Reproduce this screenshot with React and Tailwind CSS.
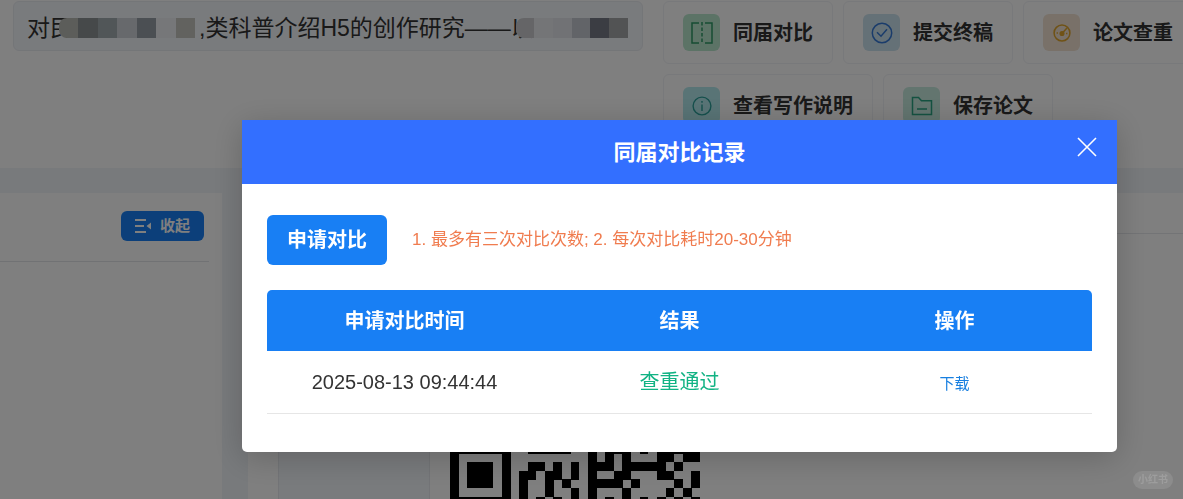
import { useState } from "react";

const records = [
  { time: "2025-08-13 09:44:44", result: "查重通过", href: "#download" },
];

const qrRows = [
  "11111110011111001011101011111",
  "10000010000000001010100011011",
  "10111010011010101110111110100",
  "10111010110110101001100011001",
  "10111010100101001111010000101",
  "10000010100100101000100001010",
  "11111110101010101010101010101",
];

function CompareIcon() {
  return (
    <svg width="22" height="22" viewBox="0 0 22 22" fill="none" stroke="#2c9a66" strokeWidth="1.5">
      <path d="M8 1H1v20h7M14 1h7v20h-7" />
      <path d="M11 0v22" strokeDasharray="3.5 2" />
    </svg>
  );
}

function CheckIcon() {
  return (
    <svg width="22" height="22" viewBox="0 0 22 22" fill="none" stroke="#3579d6" strokeWidth="1.5">
      <circle cx="11" cy="11" r="9.7" />
      <path d="M6 10.2l4 4 6-7" />
    </svg>
  );
}

function GaugeIcon() {
  return (
    <svg width="18" height="18" viewBox="0 0 20 20" fill="none" stroke="#e0a52c" strokeWidth="1.7">
      <circle cx="10" cy="10" r="8.8" />
      <circle cx="10" cy="10.5" r="2" fill="#e0a52c" />
      <path d="M11 9.5l4.5-5M4 10h1.5M14.5 10.5H16" />
    </svg>
  );
}

function InfoIcon() {
  return (
    <svg width="20" height="20" viewBox="0 0 20 20" fill="none" stroke="#2ba09a" strokeWidth="1.4">
      <circle cx="10" cy="10" r="8.9" />
      <path d="M10 8.5V15M10 5v1.8" />
    </svg>
  );
}

function FolderIcon() {
  return (
    <svg width="22" height="20" viewBox="0 0 22 20" fill="none" stroke="#2aa583" strokeWidth="1.5">
      <path d="M1.5 1.5h6l3 3.2h10v13.8h-19zM6 13h10" />
    </svg>
  );
}

function ActionCard({ icon, tint, label }) {
  return (
    <button className="flex shrink-0 items-center gap-[13px] rounded-md border border-[#f0f2f6] bg-white px-[19px] py-3">
      <span className={`flex size-[37px] items-center justify-center rounded-md ${tint}`}>{icon}</span>
      <span className="whitespace-nowrap text-[20px] leading-6 font-bold text-[#333]">{label}</span>
    </button>
  );
}

function QrCode() {
  return (
    <svg width="250" height="250" viewBox="0 0 29 29" shapeRendering="crispEdges">
      {qrRows.map((row, y) =>
        row.split("").map((cell, x) =>
          cell === "1" ? <rect key={`${x}-${y}`} x={x} y={y} width="1.02" height="1.02" fill="#000" /> : null
        )
      )}
    </svg>
  );
}

function Paper() {
  return (
    <div className="flex h-full flex-col overflow-hidden bg-[#f1f5f9]">
      <header className="flex h-[168px] shrink-0 items-start bg-white pt-px pl-[13px]">
        <h1 className="flex min-w-0 flex-1 items-center overflow-hidden rounded-md border border-[#e9ecf1] bg-[#f3f6fa] pt-2 pb-1 pl-[13px] text-[23px] leading-9 font-normal whitespace-nowrap text-[#333]">
          <span>对民</span>
          <span className="-ml-[14px] flex h-5 w-[136px] shrink-0 overflow-hidden rounded-l-lg">
            <i className="flex-1 bg-[#b9bab4]" />
            <i className="flex-1 bg-[#8c9394]" />
            <i className="flex-1 bg-[#a3acb0]" />
            <i className="flex-1 bg-[#cfd3d8]" />
            <i className="flex-1 bg-[#969fa6]" />
            <i className="flex-1 bg-[#eceff3]" />
            <i className="flex-1 bg-[#c5c4bf]" />
          </span>
          <span className="ml-1">,</span>
          <span>类科普介绍H5的创作研究——以</span>
          <span className="-ml-[18px] flex h-5 w-[112px] shrink-0 overflow-hidden rounded-l-lg">
            <i className="flex-1 bg-[#cacbce]" />
            <i className="flex-1 bg-[#e9ebef]" />
            <i className="flex-1 bg-[#e2e5ea]" />
            <i className="flex-1 bg-[#c5c9d0]" />
            <i className="flex-1 bg-[#767b86]" />
            <i className="flex-1 bg-[#a5a6a8]" />
          </span>
        </h1>
        <nav className="ml-5 flex w-[520px] shrink-0 flex-col gap-[10px]">
          <div className="flex gap-[10px]">
            <ActionCard icon={<CompareIcon />} tint="bg-[#b8e6cc]" label="同届对比" />
            <ActionCard icon={<CheckIcon />} tint="bg-[#cbe2ee]" label="提交终稿" />
            <ActionCard icon={<GaugeIcon />} tint="bg-[#f2e3d3]" label="论文查重" />
          </div>
          <div className="flex gap-[10px]">
            <ActionCard icon={<InfoIcon />} tint="bg-[#b2e8ec]" label="查看写作说明" />
            <ActionCard icon={<FolderIcon />} tint="bg-[#c6eadf]" label="保存论文" />
          </div>
        </nav>
      </header>

      <div className="flex flex-1 gap-[26px] pt-[25px]">
        <aside className="w-[222px] shrink-0 bg-white pr-[13px]">
          <div className="flex justify-end border-b border-[#e2e4e8] pt-[18px] pr-[5px] pb-5">
            <button className="flex h-[30px] items-center gap-2 rounded-md bg-[#187ff4] px-[14px] text-[15px] font-bold text-white">
              <svg width="17" height="14" viewBox="0 0 17 14" fill="#fff">
                <path d="M0 0h11v2H0zM0 6h9v2H0zM0 12h11v2H0zM16 3.5v7L11.5 7z" />
              </svg>
              收起
            </button>
          </div>
        </aside>
        <main className="flex min-w-0 flex-1 flex-col bg-white">
          <div className="h-[41px] shrink-0 border-b border-[#e6e8ec]" />
          <div className="flex flex-1 pl-[30px]">
            <div className="w-[152px] shrink-0 border-x border-[#e6e9ee] bg-[#f3f6fa]" />
            <div className="pt-[211px] pl-5">
              <QrCode />
            </div>
          </div>
        </main>
      </div>
    </div>
  );
}

function RecordDialog({ onClose }) {
  return (
    <section
      role="dialog"
      aria-labelledby="dialog-title"
      className="w-full overflow-hidden rounded-b-[5px] bg-white shadow-[0_6px_32px_rgba(0,0,0,0.2)]"
    >
      <div className="relative flex h-16 items-center justify-center bg-[#336fff] text-white">
        <h2 id="dialog-title" className="text-[22px] font-bold">同届对比记录</h2>
        <button aria-label="关闭" onClick={onClose} className="absolute top-[17px] right-5">
          <svg width="20" height="20" viewBox="0 0 20 20" stroke="#fff" strokeWidth="1.6">
            <path d="M1 1l18 18M19 1L1 19" />
          </svg>
        </button>
      </div>
      <div className="px-[25px] pt-[31px] pb-[38px]">
        <div className="flex items-center gap-[25px]">
          <button className="h-[50px] rounded-md bg-[#187ff4] px-5 text-[20px] font-bold text-white">申请对比</button>
          <p className="text-[17px] text-[#f07c4f]">1. 最多有三次对比次数; 2. 每次对比耗时20-30分钟</p>
        </div>
        <table className="mt-[25px] w-full table-fixed text-center text-[20px]">
          <thead>
            <tr className="h-[61px] text-white">
              <th className="rounded-tl-[5px] bg-[#187ff4]">申请对比时间</th>
              <th className="bg-[#187ff4]">结果</th>
              <th className="rounded-tr-[5px] bg-[#187ff4]">操作</th>
            </tr>
          </thead>
          <tbody>
            {records.map((r) => (
              <tr key={r.time} className="h-[62px] border-b border-[#e6e6e6]">
                <td className="text-[#333]">{r.time}</td>
                <td className="text-[#12b384]">{r.result}</td>
                <td>
                  <a href={r.href} className="text-[15px] text-[#187fe0]">下载</a>
                </td>
              </tr>
            ))}
          </tbody>
        </table>
      </div>
    </section>
  );
}

export default function App() {
  const [open, setOpen] = useState(true);

  return (
    <div className="relative h-screen overflow-hidden font-['Liberation_Sans','Noto_Sans_CJK_SC',sans-serif]">
      <Paper />
      {open && (
        <div className="fixed inset-0 flex items-start bg-black/50 pt-[120px] pr-[66px] pl-[242px]">
          <RecordDialog onClose={() => setOpen(false)} />
        </div>
      )}
      <span className="absolute right-[10px] bottom-[10px] rounded-full bg-white/10 px-[5px] text-[10px] leading-[18px] font-bold text-white/15">
        小红书
      </span>
    </div>
  );
}
